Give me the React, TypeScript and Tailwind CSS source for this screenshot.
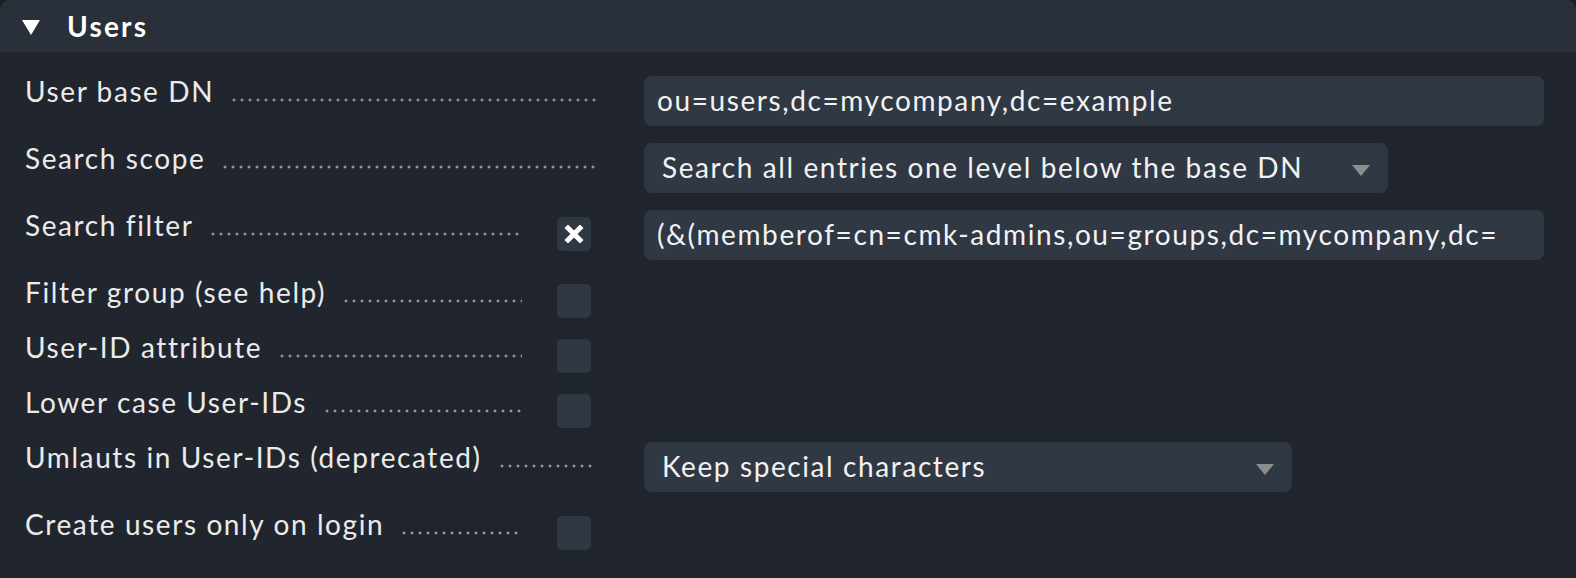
import React from "react";

type Row = {
  label: string;
  check?: "on" | "off";
  control?: { kind: "input" | "select"; text: string; width: string };
};

const rows: Row[] = [
  { label: "User base DN", control: { kind: "input", text: "ou=users,dc=mycompany,dc=example", width: "w-[900px]" } },
  { label: "Search scope", control: { kind: "select", text: "Search all entries one level below the base DN", width: "w-[744px]" } },
  {
    label: "Search filter",
    check: "on",
    control: { kind: "input", text: "(&(memberof=cn=cmk-admins,ou=groups,dc=mycompany,dc=", width: "w-[900px]" },
  },
  { label: "Filter group (see help)", check: "off" },
  { label: "User-ID attribute", check: "off" },
  { label: "Lower case User-IDs", check: "off" },
  { label: "Umlauts in User-IDs (deprecated)", control: { kind: "select", text: "Keep special characters", width: "w-[648px]" } },
  { label: "Create users only on login", check: "off" },
];

function Checkbox({ checked }: { checked: boolean }) {
  return (
    <div className="w-[34px] h-[34px] mt-[7px] rounded-[5px] bg-[#303844] flex items-center justify-center">
      {checked && (
        <svg width="20" height="18" viewBox="0 0 20 18">
          <path d="M4 3 L16 15 M16 3 L4 15" stroke="#ffffff" strokeWidth="5" strokeLinecap="square" />
        </svg>
      )}
    </div>
  );
}

function Control({ c }: { c: NonNullable<Row["control"]> }) {
  return (
    <div
      className={`${c.width} h-[50px] rounded-[8px] bg-[#303844] flex items-center overflow-hidden whitespace-nowrap ${
        c.kind === "input" ? "pl-[13px]" : "pl-[18px] pr-[18px] justify-between"
      }`}
    >
      <span className="leading-[30px] text-[#f2f2f2] pb-[2px]">{c.text}</span>
      {c.kind === "select" && (
        <svg width="18" height="11" viewBox="0 0 18 11" className="mt-[4px] shrink-0">
          <polygon points="0,0 18,0 9,11" fill="#8d8d8d" />
        </svg>
      )}
    </div>
  );
}

function FormRow({ row }: { row: Row }) {
  const tall = !!row.control;
  return (
    <div className={`flex items-start pl-[25px] ${tall ? "h-[67px]" : "h-[55px]"}`}>
      <div className="w-[571px] flex items-start shrink-0">
        <span className="leading-[30px] text-[#ebebeb] whitespace-nowrap">{row.label}</span>
        <div className="flex-1 h-[30px] ml-[16px] bg-[radial-gradient(circle,#9097a1_1.3px,transparent_1.7px)] bg-[length:8px_6px] bg-repeat-x bg-[position:0_21px]" />
        {row.check && (
          <div className="ml-[35px] mr-[5px]">
            <Checkbox checked={row.check === "on"} />
          </div>
        )}
      </div>
      {row.control && (
        <div className="ml-[48px]">
          <Control c={row.control} />
        </div>
      )}
    </div>
  );
}

export default function App() {
  return (
    <div
      className="w-[1576px] h-[578px] bg-[#1c2027] overflow-hidden tracking-[1.6px]"
      style={{ fontFamily: "Lato, 'Noto Sans', sans-serif" }}
    >
      <div className="rounded-t-[10px] overflow-hidden bg-[#21262e] h-full text-[28px]">
        <div className="h-[52px] bg-[#29303a] flex items-center">
          <svg width="18" height="15" viewBox="0 0 18 15" className="ml-[22px] mt-[3px]">
            <polygon points="0,0 18,0 9,15" fill="#ffffff" />
          </svg>
          <span className="ml-[27px] font-bold text-white tracking-[2.2px] leading-[30px]">Users</span>
        </div>
        <div className="pt-[24px]">
          {rows.map((r) => (
            <FormRow key={r.label} row={r} />
          ))}
        </div>
      </div>
    </div>
  );
}
